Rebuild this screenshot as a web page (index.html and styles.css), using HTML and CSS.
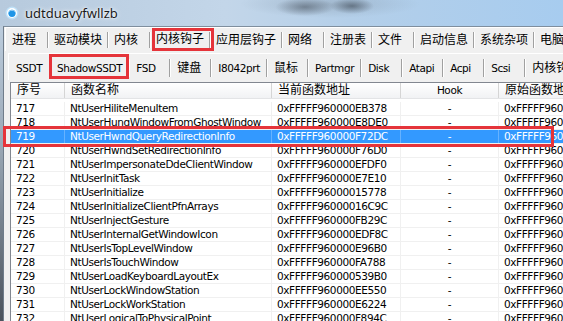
FILE: index.html
```html
<!DOCTYPE html>
<html>
<head>
    <title>udtduavyfwllzb</title>
    <link rel="stylesheet" href="styles.css">
</head>
<body>
    <div class="window">
        <div class="titlebar">
            <svg class="app-icon" width="14" height="14" viewBox="0 0 14 14">
                <circle cx="7" cy="7" r="6.5" fill="#bfe0f7"/>
                <circle cx="7" cy="7" r="5" fill="#ffffff"/>
                <circle cx="7" cy="7.3" r="3.6" fill="#1f95e6"/>
                <path d="M4.2 5.6 A3.6 3.6 0 0 1 9.8 5.6" stroke="#9fd3f7" stroke-width="1" fill="none"/>
            </svg>
            <span class="title">udtduavyfwllzb</span>
        </div>

        <div class="client">
            <div class="tabs main-tabs">
                <div class="tab">进程</div>
                <div class="tab">驱动模块</div>
                <div class="tab">内核</div>
                <div class="tab selected">内核钩子</div>
                <div class="tab">应用层钩子</div>
                <div class="tab">网络</div>
                <div class="tab">注册表</div>
                <div class="tab">文件</div>
                <div class="tab">启动信息</div>
                <div class="tab">系统杂项</div>
                <div class="tab">电脑体检</div>
            </div>

            <div class="tabs sub-tabs">
                <div class="tab en">SSDT</div>
                <div class="tab en selected">ShadowSSDT</div>
                <div class="tab en">FSD</div>
                <div class="tab">键盘</div>
                <div class="tab en">I8042prt</div>
                <div class="tab">鼠标</div>
                <div class="tab en">Partmgr</div>
                <div class="tab en">Disk</div>
                <div class="tab en">Atapi</div>
                <div class="tab en">Acpi</div>
                <div class="tab en">Scsi</div>
                <div class="tab">内核钩子</div>
            </div>

            <div class="list">
                <div class="row head">
                    <div class="cell">序号</div>
                    <div class="cell">函数名称</div>
                    <div class="cell">当前函数地址</div>
                    <div class="cell en center">Hook</div>
                    <div class="cell">原始函数地址</div>
                </div>
                <div class="rows">
                    <div class="row"><div class="cell">717</div><div class="cell">NtUserHiliteMenuItem</div><div class="cell">0xFFFFF960000EB378</div><div class="cell center">-</div><div class="cell">0xFFFFF960000EB378</div></div>
                    <div class="row"><div class="cell">718</div><div class="cell">NtUserHungWindowFromGhostWindow</div><div class="cell">0xFFFFF960000E8DE0</div><div class="cell center">-</div><div class="cell">0xFFFFF960000E8DE0</div></div>
                    <div class="row selected"><div class="cell">719</div><div class="cell">NtUserHwndQueryRedirectionInfo</div><div class="cell">0xFFFFF960000F72DC</div><div class="cell center">-</div><div class="cell">0xFFFFF960000F72DC</div></div>
                    <div class="row"><div class="cell">720</div><div class="cell">NtUserHwndSetRedirectionInfo</div><div class="cell">0xFFFFF960000F76D0</div><div class="cell center">-</div><div class="cell">0xFFFFF960000F76D0</div></div>
                    <div class="row"><div class="cell">721</div><div class="cell">NtUserImpersonateDdeClientWindow</div><div class="cell">0xFFFFF960000EFDF0</div><div class="cell center">-</div><div class="cell">0xFFFFF960000EFDF0</div></div>
                    <div class="row"><div class="cell">722</div><div class="cell">NtUserInitTask</div><div class="cell">0xFFFFF960000E7E10</div><div class="cell center">-</div><div class="cell">0xFFFFF960000E7E10</div></div>
                    <div class="row"><div class="cell">723</div><div class="cell">NtUserInitialize</div><div class="cell">0xFFFFF96000015778</div><div class="cell center">-</div><div class="cell">0xFFFFF96000015778</div></div>
                    <div class="row"><div class="cell">724</div><div class="cell">NtUserInitializeClientPfnArrays</div><div class="cell">0xFFFFF96000016C9C</div><div class="cell center">-</div><div class="cell">0xFFFFF96000016C9C</div></div>
                    <div class="row"><div class="cell">725</div><div class="cell">NtUserInjectGesture</div><div class="cell">0xFFFFF960000FB29C</div><div class="cell center">-</div><div class="cell">0xFFFFF960000FB29C</div></div>
                    <div class="row"><div class="cell">726</div><div class="cell">NtUserInternalGetWindowIcon</div><div class="cell">0xFFFFF960000EDF8C</div><div class="cell center">-</div><div class="cell">0xFFFFF960000EDF8C</div></div>
                    <div class="row"><div class="cell">727</div><div class="cell">NtUserIsTopLevelWindow</div><div class="cell">0xFFFFF960000E96B0</div><div class="cell center">-</div><div class="cell">0xFFFFF960000E96B0</div></div>
                    <div class="row"><div class="cell">728</div><div class="cell">NtUserIsTouchWindow</div><div class="cell">0xFFFFF960000FA788</div><div class="cell center">-</div><div class="cell">0xFFFFF960000FA788</div></div>
                    <div class="row"><div class="cell">729</div><div class="cell">NtUserLoadKeyboardLayoutEx</div><div class="cell">0xFFFFF960000539B0</div><div class="cell center">-</div><div class="cell">0xFFFFF960000539B0</div></div>
                    <div class="row"><div class="cell">730</div><div class="cell">NtUserLockWindowStation</div><div class="cell">0xFFFFF960000EE550</div><div class="cell center">-</div><div class="cell">0xFFFFF960000EE550</div></div>
                    <div class="row"><div class="cell">731</div><div class="cell">NtUserLockWorkStation</div><div class="cell">0xFFFFF960000E6224</div><div class="cell center">-</div><div class="cell">0xFFFFF960000E6224</div></div>
                    <div class="row"><div class="cell">732</div><div class="cell">NtUserLogicalToPhysicalPoint</div><div class="cell">0xFFFFF960000F894C</div><div class="cell center">-</div><div class="cell">0xFFFFF960000F894C</div></div>
                </div>
            </div>
        </div>
    </div>

    <!-- red annotation boxes drawn over the window -->
    <div class="mark mark-tab"></div>
    <div class="mark mark-subtab"></div>
    <div class="mark mark-row"></div>
</body>
</html>
```

FILE: styles.css
```css
body {
    margin: 0;
    width: 563px;
    height: 321px;
    overflow: hidden;
    position: relative;
    font-family: "DejaVu Sans", "Noto Sans CJK SC", sans-serif;
    font-size: 10.5px;
    letter-spacing: -0.4px;
    color: #000;
    background: #c4d4e4;
}
.window {
    height: 321px;
    display: flex;
    flex-direction: column;
    background: linear-gradient(#c4d5e6, #9aa8b6 45%, #4a525c);
}
.titlebar {
    height: 26px;
    flex: none;
    display: flex;
    align-items: center;
    gap: 6px;
    padding-left: 5px;
    background:
        radial-gradient(ellipse 30px 9px at 305px 7px, rgba(70, 80, 92, 0.55), transparent),
        radial-gradient(ellipse 22px 8px at 352px 6px, rgba(60, 70, 82, 0.6), transparent),
        radial-gradient(ellipse 90px 14px at 330px 4px, rgba(120, 135, 150, 0.35), transparent),
        linear-gradient(to right, #b7cadd, #c3d6e9 40%, #b4cfe9 62%, #a7ccef);
}
.app-icon {
    flex: none;
}
.title {
    font-family: "Noto Sans", sans-serif;
    font-size: 13px;
    letter-spacing: 0;
    color: #1a1a1a;
    text-shadow: 0 0 5px #fff, 0 0 2px #fff;
}
.client {
    flex: 1;
    min-height: 0;
    margin-left: 3px;
    border-left: 1px solid #6f7c8a;
    border-top: 1px solid #7f8e9d;
    background: #f0f0f0;
    display: flex;
    flex-direction: column;
}

/* tab strips */
.tabs {
    display: flex;
    flex: none;
    white-space: nowrap;
    overflow: hidden;
    border-top: 1px solid #fff;
    border-left: 1px solid #fff;
}
.main-tabs {
    margin-left: 1px;
    height: 23px;
}
.sub-tabs {
    margin: 2px 0 0 4px;
    height: 26px;
}
.tab {
    flex: none;
    box-sizing: border-box;
    min-width: 42px;
    padding: 0 5px 0 6px;
    margin: 4px 0 3px;
    line-height: 16px;
    font-size: 12px;
    letter-spacing: 0;
    border-right: 1px solid #a0a0a0;
    box-shadow: 1px 0 0 #fff;
}
.sub-tabs .tab {
    min-width: 41px;
    padding: 0 6px 0 7px;
    margin: 5px 0 3px;
    line-height: 18px;
}
.tab.en {
    font-size: 10.5px;
    letter-spacing: -0.4px;
}
.main-tabs .tab.selected {
    line-height: 14px;
}

/* list view */
.list {
    flex: 1;
    min-height: 0;
    margin: 2px 0 0 6px;
    border-left: 1px solid #828790;
    border-top: 1px solid #828790;
    background: #fff;
    overflow: hidden;
}
.row {
    display: grid;
    grid-template-columns: 54px 207px 129px 98px 90px;
    height: 14px;
    line-height: 13px;
    box-sizing: border-box;
    border-bottom: 1px solid #f0f0f0;
    white-space: nowrap;
}
.cell {
    overflow: hidden;
    padding-left: 5px;
    border-right: 1px solid #f0f0f0;
}
.cell.center {
    text-align: center;
    padding-left: 0;
}
.row.head {
    height: 16px;
    line-height: 15px;
    background: linear-gradient(#ffffff, #f1f2f4);
    border-bottom: 1px solid #e3e4e6;
    font-size: 12px;
    letter-spacing: 0;
}
.row.head .cell {
    padding-left: 6px;
    border-right-color: #d5d5d5;
}
.row.head .cell.center {
    padding-left: 0;
}
.row.head .cell.en {
    font-size: 10.5px;
    letter-spacing: -0.4px;
}
.rows {
    padding-top: 3px;
}
.row.selected {
    background: #3399ff;
    color: #fff;
}
.row.selected .cell {
    border-right-color: #66b2ff;
}

/* red annotation boxes */
.mark {
    position: absolute;
    border: 3px solid #e5343a;
    box-sizing: border-box;
}
.mark-tab {
    left: 152px;
    top: 28px;
    width: 62px;
    height: 23px;
}
.mark-subtab {
    left: 49px;
    top: 54px;
    width: 80px;
    height: 25px;
}
.mark-row {
    left: 3px;
    top: 126px;
    width: 551px;
    height: 21px;
}
```
